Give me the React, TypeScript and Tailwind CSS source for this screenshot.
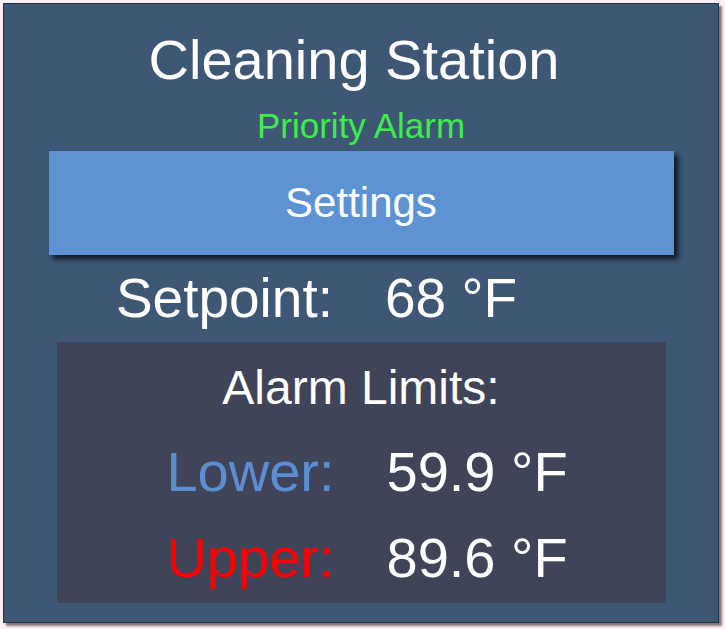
import React from 'react';

const font = { fontFamily: '"Liberation Sans", Arial, sans-serif' };

function Row({ label, value, labelClass, labelWidth, size }: { label: string; value: string; labelClass: string; labelWidth: string; size: string }) {
  return (
    <div className={`flex w-full ${size} leading-none`}>
      <div className={`${labelWidth} text-right ${labelClass}`}>{label}</div>
      <div className="ml-[52px] text-white whitespace-nowrap">{value}</div>
    </div>
  );
}

export default function App() {
  return (
    <div className="min-h-screen bg-[#fdf0f5] p-[3px]" style={font}>
      <div className="w-[716px] h-[620px] border border-[#22324a] bg-[#3d5774] shadow-[3px_3px_2px_rgba(60,40,40,0.6)] flex flex-col items-center">
        <div className="mt-[28px] pr-[14px] text-[56px] leading-none text-white whitespace-nowrap">Cleaning Station</div>
        <div className="mt-[20px] text-[35px] leading-none text-[#3ded4a] whitespace-nowrap">Priority Alarm</div>
        <div className="mt-[8px] w-[625px] h-[104px] bg-[#5e93d3] shadow-[4px_4px_5px_rgba(5,10,20,0.85)] flex items-center justify-center text-[42px] leading-none text-white">
          Settings
        </div>
        <div className="mt-[16px] w-full">
          <Row label="Setpoint:" value="68 °F" labelClass="text-white" labelWidth="w-[329px]" size="text-[55px]" />
        </div>
        <div className="mt-[16px] w-[609px] h-[261px] bg-[#3f4458] flex flex-col items-center">
          <div className="mt-[22px] text-[48px] leading-none text-white whitespace-nowrap">Alarm Limits:</div>
          <div className="mt-[32px] w-full">
            <Row label="Lower:" value="59.9 °F" labelClass="text-[#5b8ed3]" labelWidth="w-[278px]" size="text-[56px]" />
          </div>
          <div className="mt-[30px] w-full">
            <Row label="Upper:" value="89.6 °F" labelClass="text-[#ff0000]" labelWidth="w-[278px]" size="text-[56px]" />
          </div>
        </div>
      </div>
    </div>
  );
}
